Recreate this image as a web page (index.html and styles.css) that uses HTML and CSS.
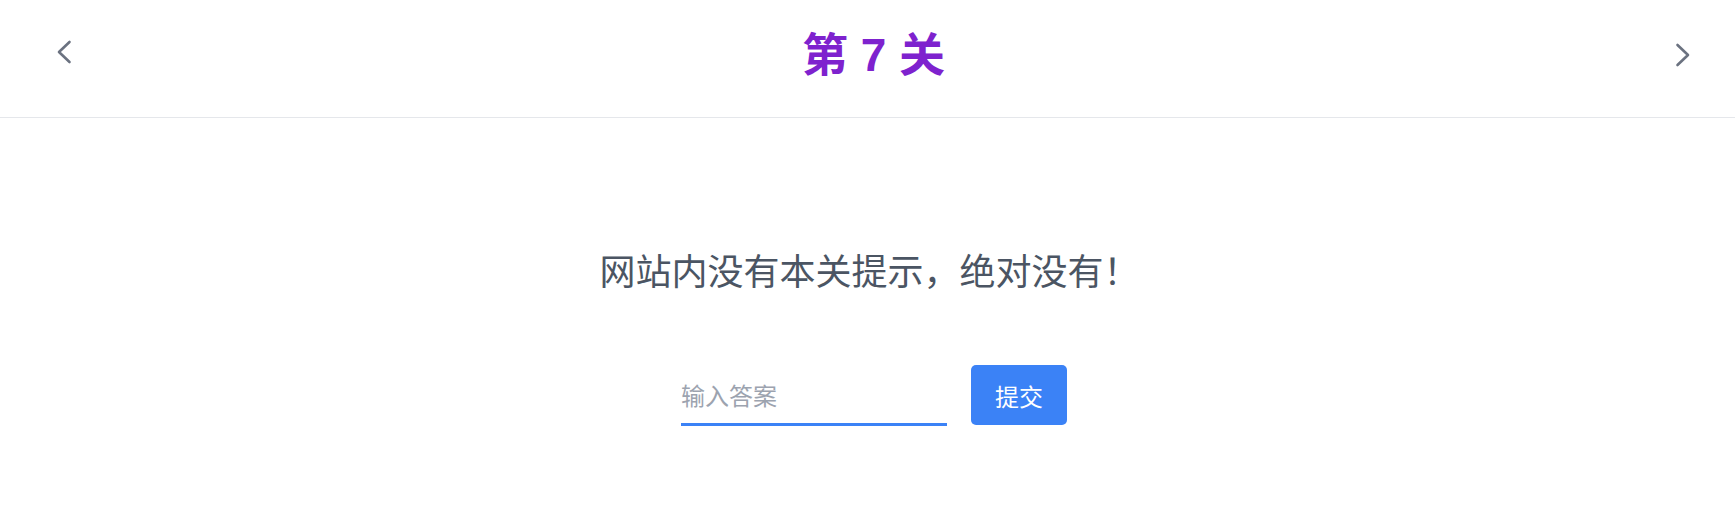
FILE: index.html
```html
<!DOCTYPE html>
<html lang="zh-CN">
<head>
<meta charset="utf-8">
<title>第 7 关</title>
<link rel="stylesheet" href="styles.css">
</head>
<body>
<header class="topbar">
  <a class="nav nav-prev" href="#" aria-label="上一关">
    <svg width="16" height="24" viewBox="0 0 16 24"><polyline points="13.5,2 3,12 13.5,22" fill="none" stroke="#6b7280" stroke-width="2.6" stroke-linecap="round" stroke-linejoin="round"/></svg>
  </a>
  <h1 class="title">第 7 关</h1>
  <a class="nav nav-next" href="#" aria-label="下一关">
    <svg width="16" height="24" viewBox="0 0 16 24"><polyline points="2.5,2 13,12 2.5,22" fill="none" stroke="#6b7280" stroke-width="2.6" stroke-linecap="round" stroke-linejoin="round"/></svg>
  </a>
</header>
<main class="content">
  <p class="hint">网站内没有本关提示，绝对没有！</p>
  <form class="answer-form">
    <input class="answer-input" type="text" placeholder="输入答案">
    <button class="submit-btn" type="button">提交</button>
  </form>
</main>
</body>
</html>
```
FILE: styles.css
```css
* { box-sizing: border-box; }
html, body { margin: 0; padding: 0; background: #ffffff; }
body {
  font-family: "Noto Sans CJK SC", "Liberation Sans", sans-serif;
  width: 1735px;
  height: 509px;
  overflow: hidden;
}
.topbar {
  display: flex;
  justify-content: space-between;
  align-items: flex-start;
  height: 118px;
  padding: 0 44px 0 56px;
  border-bottom: 1px solid #e5e7eb;
}
.nav { display: block; line-height: 0; }
.nav svg { display: block; }
.nav-prev { margin-top: 40px; }
.nav-next { margin-top: 43px; }
.title {
  margin: 25px 0 0;
  font-family: "Liberation Sans", "Noto Sans CJK SC", sans-serif;
  font-weight: 700;
  font-size: 46px;
  line-height: 60px;
  color: #7e22ce;
}
.content {
  display: flex;
  flex-direction: column;
  align-items: center;
  padding-top: 126px;
}
.hint {
  margin: 0;
  padding-left: 4px;
  font-size: 36px;
  line-height: 51px;
  color: #4b5563;
}
.answer-form {
  display: flex;
  align-items: flex-end;
  gap: 24px;
  margin-top: 70px;
  padding-left: 13px;
}
.answer-input {
  width: 266px;
  height: 61px;
  padding: 0;
  border: none;
  border-bottom: 3px solid #3b82f6;
  outline: none;
  font-family: "Noto Sans CJK SC", sans-serif;
  font-size: 24px;
  color: #374151;
  background: transparent;
}
.answer-input::placeholder { color: #9ca3af; }
.submit-btn {
  width: 96px;
  height: 60px;
  margin-bottom: 1px;
  border: none;
  border-radius: 5px;
  background: #3b82f6;
  color: #ffffff;
  font-family: "Noto Sans CJK SC", sans-serif;
  font-size: 24px;
  padding: 0;
}
```
